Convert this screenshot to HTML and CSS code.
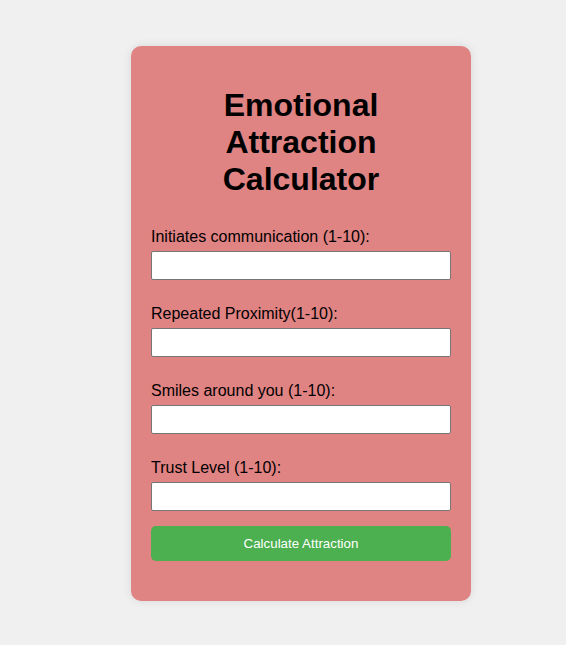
FILE: index.html
```html
<!DOCTYPE html>
<html lang="en">
<head>
<meta charset="UTF-8">
<title>Emotional Attraction Calculator</title>
<link rel="stylesheet" href="styles.css">
</head>
<body>
<div class="card">
  <h1 class="title">Emotional Attraction Calculator</h1>
  <form class="form">
    <div class="field">
      <label class="label" for="comm">Initiates communication (1-10):</label>
      <input class="input" id="comm" type="text">
    </div>
    <div class="field">
      <label class="label" for="prox">Repeated Proximity(1-10):</label>
      <input class="input" id="prox" type="text">
    </div>
    <div class="field">
      <label class="label" for="smile">Smiles around you (1-10):</label>
      <input class="input" id="smile" type="text">
    </div>
    <div class="field last">
      <label class="label" for="trust">Trust Level (1-10):</label>
      <input class="input" id="trust" type="text">
    </div>
    <button class="btn" type="button">Calculate Attraction</button>
  </form>
</div>
</body>
</html>
```
FILE: styles.css
```css
html, body {
  margin: 0;
  padding: 0;
}
body {
  background: #f0f0f0;
  font-family: "Liberation Sans", Arial, sans-serif;
  padding: 46px 0 0 131px;
  min-height: 645px;
  box-sizing: border-box;
}
.card {
  width: 340px;
  box-sizing: border-box;
  background: #e08383;
  border-radius: 10px;
  padding: 20px 20px 40px;
  box-shadow: 0 0 10px rgba(0, 0, 0, 0.1);
}
.title {
  font-size: 32px;
  font-weight: bold;
  text-align: center;
  line-height: 36.8px;
  margin: 21.44px 0 30px;
  color: #000;
}
.form {
  display: flex;
  flex-direction: column;
}
.field {
  display: flex;
  flex-direction: column;
  margin-bottom: 24.6px;
}
.field.last {
  margin-bottom: 15px;
}
.label {
  font-size: 16px;
  line-height: 18.4px;
  margin-bottom: 5px;
  color: #000;
}
.input {
  width: 300px;
  height: 29px;
  box-sizing: border-box;
  border: 1px solid #767676;
  border-radius: 2px;
  background: #fff;
  margin: 0;
  padding: 4px 6px;
  font-family: "Liberation Sans", Arial, sans-serif;
  font-size: 13.33px;
}
.btn {
  width: 300px;
  height: 35px;
  box-sizing: border-box;
  background: #4caf50;
  color: #fff;
  border: none;
  border-radius: 5px;
  font-family: "Liberation Sans", Arial, sans-serif;
  font-size: 13.33px;
  padding: 10px;
  cursor: pointer;
}
```
